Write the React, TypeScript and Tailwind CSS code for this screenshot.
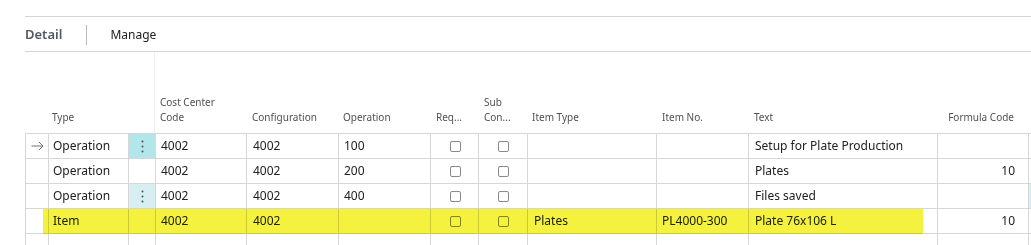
import React from "react";

const cols = [23, 80, 27, 91, 92, 92, 48, 49, 129, 92, 189, 91];
const gridCols =
  "grid grid-cols-[23px_80px_27px_91px_92px_92px_48px_49px_129px_92px_189px_91px_1fr]";

type Row = {
  arrow?: boolean;
  type: string;
  dots?: "strong" | "light" | null;
  cc: string;
  conf: string;
  op: string;
  itemType: string;
  itemNo: string;
  text: string;
  formula: string;
  extraCyan?: boolean;
};

const rows: Row[] = [
  { arrow: true, type: "Operation", dots: "strong", cc: "4002", conf: "4002", op: "100", itemType: "", itemNo: "", text: "Setup for Plate Production", formula: "" },
  { type: "Operation", dots: null, cc: "4002", conf: "4002", op: "200", itemType: "", itemNo: "", text: "Plates", formula: "10" },
  { type: "Operation", dots: "light", cc: "4002", conf: "4002", op: "400", itemType: "", itemNo: "", text: "Files saved", formula: "", extraCyan: true },
  { type: "Item", dots: null, cc: "4002", conf: "4002", op: "", itemType: "Plates", itemNo: "PL4000-300", text: "Plate 76x106 L", formula: "10" },
];

const Check = () => (
  <div className="w-[11px] h-[11px] rounded-[2px] border border-[#8a8a8a]" />
);

const cell = "h-[25px] border-r border-b border-[#d6d6d6] flex items-center overflow-hidden whitespace-nowrap";

export default function App() {
  return (
    <div className="w-[1031px] h-[245px] bg-white overflow-hidden text-[#212121]" style={{ fontFamily: '"Noto Sans", "Open Sans", sans-serif' }}>
      <div className="h-[16px]" />
      <div className="ml-[25px] border-t border-b border-[#d2d4d8] h-[36px] flex items-center pt-[1px]">
        <span className="text-[13px] font-semibold text-[#505a66] leading-none">Detail</span>
        <div className="ml-[24px] w-px h-[20px] bg-[#b8bcc2]" />
        <span className="ml-[23px] text-[12px] text-[#212121] leading-none">Manage</span>
      </div>
      <div className="relative ml-[25px]">
        {/* header */}
        <div className={gridCols + " h-[81px] text-[10px] text-[#505050] leading-[15px]"}>
          <div />
          <div className="flex items-end pb-[8px] pl-[4px]">Type</div>
          <div />
          <div className="flex items-end pb-[8px] pl-[5px] border-l border-[#efefef] -ml-px">
            <span>Cost Center<br />Code</span>
          </div>
          <div className="flex items-end pb-[8px] pl-[6px]">Configuration</div>
          <div className="flex items-end pb-[8px] pl-[5px]">Operation</div>
          <div className="flex items-end pb-[8px] pl-[6px]">Req...</div>
          <div className="flex items-end pb-[8px] pl-[6px]">
            <span>Sub<br />Con...</span>
          </div>
          <div className="flex items-end pb-[8px] pl-[5px]">Item Type</div>
          <div className="flex items-end pb-[8px] pl-[6px]">Item No.</div>
          <div className="flex items-end pb-[8px] pl-[6px]">Text</div>
          <div className="flex items-end justify-end pb-[8px] pr-[14px]">Formula Code</div>
          <div />
        </div>
        {/* body */}
        <div className="border-l border-t border-[#d6d6d6] text-[12px]">
          {rows.map((r, i) => (
            <div key={i} className={gridCols}>
              <div className={cell + " justify-center text-[#6b6b6b]"}>
                {r.arrow ? (
                  <svg width="13" height="10" viewBox="0 0 13 10" fill="none" stroke="#707070" strokeWidth="1">
                    <path d="M0.5 5H12M8 1l4 4-4 4" />
                  </svg>
                ) : null}
              </div>
              <div className={cell + " pl-[4px]"}>{r.type}</div>
              <div
                className={
                  cell +
                  " justify-center " +
                  (r.dots === "strong" ? "bg-[#b2e6eb]" : r.dots === "light" ? "bg-[#d8eff2]" : "")
                }
              >
                {r.dots ? (
                  <svg width="3" height="13" viewBox="0 0 3 13" fill="#505050">
                    <circle cx="1.5" cy="1.5" r="1" />
                    <circle cx="1.5" cy="6.5" r="1" />
                    <circle cx="1.5" cy="11.5" r="1" />
                  </svg>
                ) : null}
              </div>
              <div className={cell + " pl-[5px]"}>{r.cc}</div>
              <div className={cell + " pl-[6px]"}>{r.conf}</div>
              <div className={cell + " pl-[5px]"}>{r.op}</div>
              <div className={cell + " justify-center pl-[2px]"}><Check /></div>
              <div className={cell + " justify-center"}><Check /></div>
              <div className={cell + " pl-[6px]"}>{r.itemType}</div>
              <div className={cell + " pl-[5px]"}>{r.itemNo}</div>
              <div className={cell + " pl-[6px]"}>{r.text}</div>
              <div className={cell + " justify-end pr-[13px]"}>{r.formula}</div>
              <div className={"h-[25px] border-b border-[#d6d6d6] " + (r.extraCyan ? "bg-[#d8eff2]" : "")} />
            </div>
          ))}
          <div className={gridCols}>
            {cols.map((_, i) => (
              <div key={i} className="h-[12px] border-r border-[#d6d6d6]" />
            ))}
          </div>
        </div>
        {/* highlighter mark over the Item row */}
        <div className="absolute left-[18px] top-[157px] w-[880px] h-[25px] bg-[#f4f23f] mix-blend-multiply pointer-events-none" />
      </div>
    </div>
  );
}
